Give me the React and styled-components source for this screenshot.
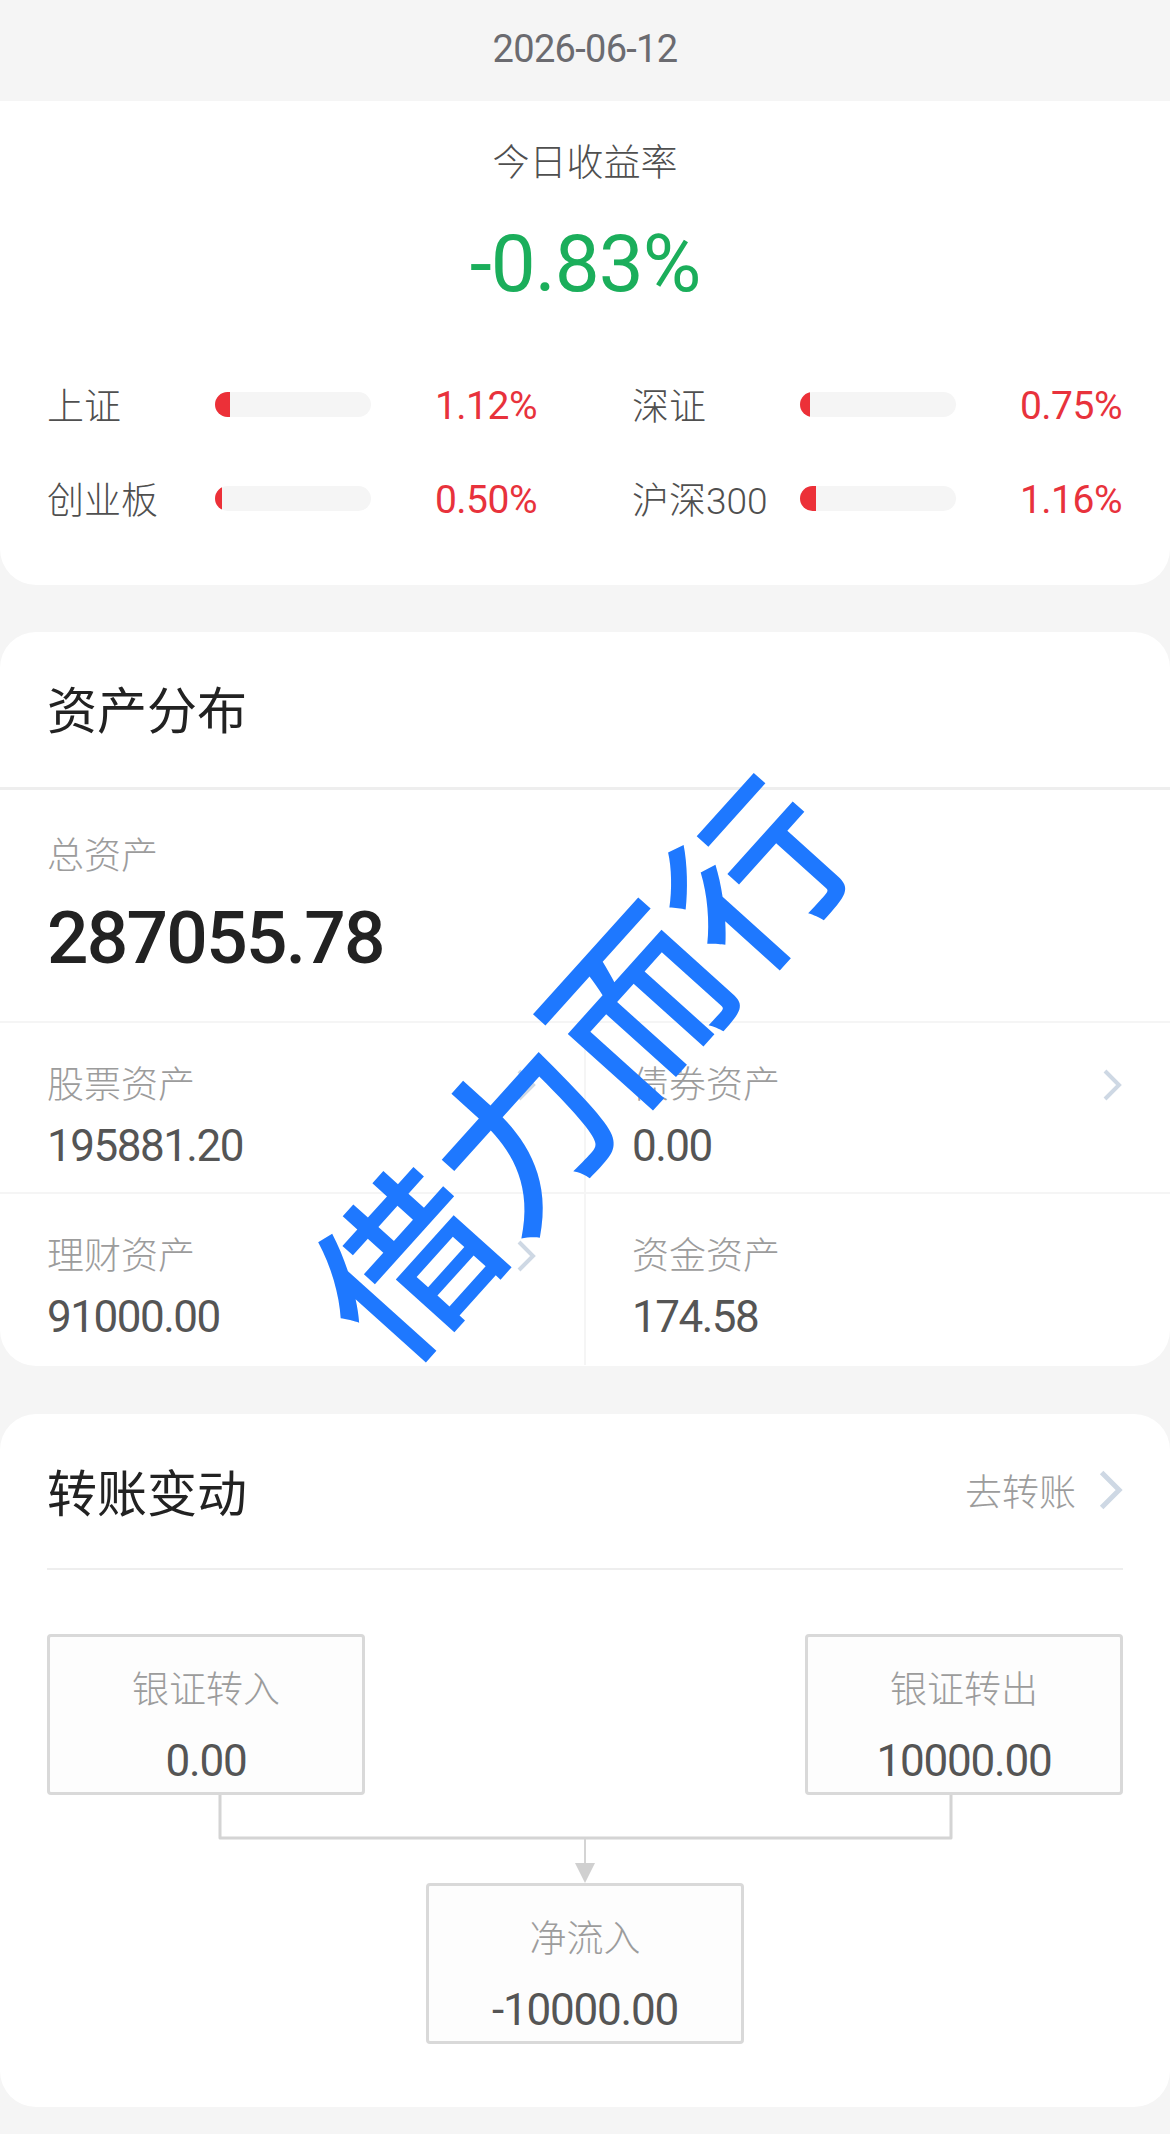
import React from 'react';
import styled, { createGlobalStyle } from 'styled-components';

const GlobalStyle = createGlobalStyle`
  html, body {
    margin: 0;
    padding: 0;
    background: #f5f5f5;
  }
  * {
    box-sizing: border-box;
  }
`;

const CJK = `Roboto, "Noto Sans CJK SC", sans-serif`;

const Page = styled.div`
  position: relative;
  width: 1170px;
  height: 2134px;
  overflow: hidden;
  background: #f5f5f5;
  font-family: ${CJK};
`;

const DateBar = styled.div`
  height: 101px;
  padding-bottom: 3px;
  display: flex;
  align-items: center;
  justify-content: center;
  font-size: 38px;
  letter-spacing: -0.7px;
  color: #6b6b70;
`;

const Card = styled.section`
  background: #fff;
  border-radius: ${props => (props.$flatTop ? '0 0 36px 36px' : '36px')};
  margin-top: ${props => props.$gap || 0}px;
  height: ${props => props.$height}px;
  overflow: hidden;
`;

const Rate = styled.div`
  text-align: center;
  padding-top: 39px;
`;

const RateTitle = styled.div`
  font-size: 37px;
  line-height: 48px;
  font-weight: 300;
  color: #4f4f4f;
`;

const RateValue = styled.div`
  font-size: 80px;
  line-height: 90px;
  letter-spacing: -1px;
  margin-top: 31px;
  color: #1bae5b;
`;

const IndexGrid = styled.div`
  display: grid;
  grid-template-columns: 490px 490px;
  column-gap: 95px;
  row-gap: 44px;
  padding: 70px 0 0 47px;
`;

const IndexRow = styled.div`
  display: flex;
  align-items: center;
  height: 50px;
`;

const IndexName = styled.span`
  width: 168px;
  font-size: 37px;
  font-weight: 300;
  color: #4f4f4f;
  white-space: nowrap;
`;

const Track = styled.div`
  width: 156px;
  height: 25px;
  border-radius: 13px;
  background: #f5f5f5;
  overflow: hidden;
`;

const Fill = styled.div`
  height: 100%;
  background: #ec3038;
`;

const IndexPct = styled.span`
  flex: 1;
  padding-top: 3px;
  text-align: right;
  font-size: 39px;
  letter-spacing: -0.5px;
  color: #e8323c;
`;

const CardHeader = styled.div`
  display: flex;
  align-items: center;
  justify-content: space-between;
  font-size: 50px;
  font-weight: 400;
  color: #222;
`;

const AssetHeader = styled(CardHeader)`
  height: 158px;
  padding: 0 47px 6px;
  border-bottom: 3px solid #eeeeee;
`;

const Total = styled.div`
  height: 233px;
  padding: 42px 47px 0;
  border-bottom: 2px solid #f5f5f5;
`;

const Label = styled.div`
  font-size: 37px;
  line-height: 50px;
  font-weight: 300;
  color: #9c9c9c;
`;

const TotalValue = styled.div`
  font-size: 73px;
  line-height: 84px;
  letter-spacing: -1.7px;
  font-weight: 500;
  margin-top: 14px;
  color: #222;
`;

const AssetGrid = styled.div`
  display: grid;
  grid-template-columns: 584px 586px;
  grid-auto-rows: 171px;
`;

const AssetCell = styled.div`
  position: relative;
  padding: 38px 47px 0;
  border-bottom: ${props => (props.$last ? 'none' : '2px solid #f5f5f5')};
  border-left: ${props => (props.$right ? '2px solid #f5f5f5' : 'none')};
  padding-left: ${props => (props.$right ? '46px' : '47px')};
`;

const CellValue = styled.div`
  font-size: 44px;
  line-height: 56px;
  letter-spacing: -1.5px;
  margin-top: 7px;
  color: #555;
`;

const CellChevron = styled.svg`
  position: absolute;
  right: 48px;
  top: 46px;
`;

const TransferHeader = styled(CardHeader)`
  height: 156px;
  margin: 0 47px;
  padding-bottom: 2px;
  border-bottom: 2px solid #eeeeee;
`;

const GoLink = styled.div`
  display: flex;
  align-items: center;
  gap: 23px;
  font-size: 37px;
  font-weight: 300;
  color: #9c9c9c;
`;

const Flow = styled.div`
  padding: 64px 47px 0;
`;

const FlowRow = styled.div`
  display: flex;
  justify-content: space-between;
`;

const FlowBox = styled.div`
  width: 318px;
  height: 161px;
  margin: ${props => (props.$center ? '0 auto' : '0')};
  padding-top: 29px;
  border: 3px solid #d9d9d9;
  border-radius: 4px;
  background: #fdfdfd;
  text-align: center;
`;

const FlowValue = styled.div`
  font-size: 44px;
  line-height: 56px;
  letter-spacing: -1.2px;
  margin-top: 17px;
  color: #555;
`;

const Connector = styled.svg`
  display: block;
`;

const Watermark = styled.div`
  position: absolute;
  left: 574px;
  top: 1063px;
  transform: translate(-50%, -50%) rotate(-48deg);
  font-family: "Noto Sans CJK SC", sans-serif;
  font-size: 174px;
  font-weight: 500;
  line-height: 1;
  white-space: nowrap;
  color: #1e78ff;
`;

const indices = [
  { name: '上证', pct: '1.12%', fill: 15 },
  { name: '深证', pct: '0.75%', fill: 10 },
  { name: '创业板', pct: '0.50%', fill: 7 },
  { name: '沪深300', pct: '1.16%', fill: 16 },
];

const assets = [
  { name: '股票资产', value: '195881.20', more: true },
  { name: '债券资产', value: '0.00', more: true, right: true },
  { name: '理财资产', value: '91000.00', more: true, last: true },
  { name: '资金资产', value: '174.58', right: true, last: true },
];

const Chevron = ({ w = 19, h = 32, as: As = 'svg' }) => (
  <As width={w} height={h} viewBox="0 0 19 32" fill="none">
    <path d="M2 2 L16 16 L2 30" stroke="#ced8e4" strokeWidth="4" />
  </As>
);

const App = () => (
  <Page>
    <GlobalStyle />
    <DateBar>2026-06-12</DateBar>
    <Card $flatTop $height={484}>
      <Rate>
        <RateTitle>今日收益率</RateTitle>
        <RateValue>-0.83%</RateValue>
      </Rate>
      <IndexGrid>
        {indices.map(item => (
          <IndexRow key={item.name}>
            <IndexName>{item.name}</IndexName>
            <Track>
              <Fill style={{ width: item.fill }} />
            </Track>
            <IndexPct>{item.pct}</IndexPct>
          </IndexRow>
        ))}
      </IndexGrid>
    </Card>

    <Card $gap={47} $height={734}>
      <AssetHeader>资产分布</AssetHeader>
      <Total>
        <Label>总资产</Label>
        <TotalValue>287055.78</TotalValue>
      </Total>
      <AssetGrid>
        {assets.map(item => (
          <AssetCell key={item.name} $right={item.right} $last={item.last}>
            <Label>{item.name}</Label>
            <CellValue>{item.value}</CellValue>
            {item.more && <Chevron as={CellChevron} />}
          </AssetCell>
        ))}
      </AssetGrid>
    </Card>

    <Card $gap={48} $height={693}>
      <TransferHeader>
        转账变动
        <GoLink>
          去转账
          <Chevron w={24} h={40} />
        </GoLink>
      </TransferHeader>
      <Flow>
        <FlowRow>
          <FlowBox>
            <Label>银证转入</Label>
            <FlowValue>0.00</FlowValue>
          </FlowBox>
          <FlowBox>
            <Label>银证转出</Label>
            <FlowValue>10000.00</FlowValue>
          </FlowBox>
        </FlowRow>
        <Connector width="1076" height="88" viewBox="0 0 1076 88" fill="none">
          <path d="M173 0 V43 H904 V0" stroke="#d4d4d4" strokeWidth="3" strokeLinejoin="round" />
          <path d="M538 43 V72" stroke="#d4d4d4" strokeWidth="2" />
          <path d="M528 68 H548 L538 88 Z" fill="#d0d0d0" />
        </Connector>
        <FlowBox $center>
          <Label>净流入</Label>
          <FlowValue>-10000.00</FlowValue>
        </FlowBox>
      </Flow>
    </Card>

    <Watermark>借力而行</Watermark>
  </Page>
);

export default App;
